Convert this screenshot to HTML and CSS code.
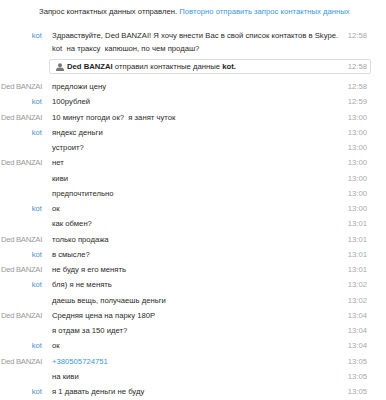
FILE: index.html
```html
<!DOCTYPE html>
<html lang="ru">
<head>
<meta charset="utf-8">
<link rel="stylesheet" href="styles.css">
</head>
<body>
<div class="chat">
  <div class="notice">Запрос контактных данных отправлен. <a class="link">Повторно отправить запрос контактных данных</a></div>

  <div class="row first">
    <div class="name me">kot</div>
    <div class="msg">Здравствуйте, Ded BANZAI! Я хочу внести Вас в свой список контактов в Skype.<br>kot&nbsp; на траксу&nbsp; капюшон, по чем продаш?</div>
    <div class="time">12:58</div>
  </div>

  <div class="contact">
    <svg class="person" width="8" height="8" viewBox="0 0 8 8"><circle cx="4" cy="2.2" r="2" fill="#777"/><path d="M0 8 C0 5 1.5 4.5 4 4.5 C6.5 4.5 8 5 8 8 Z" fill="#777"/></svg>
    <div class="ctext"><b>Ded BANZAI</b> отправил контактные данные <b>kot.</b></div>
    <div class="time">12:58</div>
  </div>

  <div class="row"><div class="name">Ded BANZAI</div><div class="msg">предложи цену</div><div class="time">12:58</div></div>
  <div class="row"><div class="name me">kot</div><div class="msg">100рублей</div><div class="time">12:59</div></div>
  <div class="row"><div class="name">Ded BANZAI</div><div class="msg">10 минут погоди ок?&nbsp; я занят чуток</div><div class="time">13:00</div></div>
  <div class="row"><div class="name me">kot</div><div class="msg">яндекс деньги</div><div class="time">13:00</div></div>
  <div class="row"><div class="name"></div><div class="msg">устроит?</div><div class="time">13:00</div></div>
  <div class="row"><div class="name">Ded BANZAI</div><div class="msg">нет</div><div class="time">13:00</div></div>
  <div class="row"><div class="name"></div><div class="msg">киви</div><div class="time">13:00</div></div>
  <div class="row"><div class="name"></div><div class="msg">предпочтительно</div><div class="time">13:00</div></div>
  <div class="row"><div class="name me">kot</div><div class="msg">ок</div><div class="time">13:00</div></div>
  <div class="row"><div class="name"></div><div class="msg">как обмен?</div><div class="time">13:01</div></div>
  <div class="row"><div class="name">Ded BANZAI</div><div class="msg">только продажа</div><div class="time">13:01</div></div>
  <div class="row"><div class="name me">kot</div><div class="msg">в смысле?</div><div class="time">13:01</div></div>
  <div class="row"><div class="name">Ded BANZAI</div><div class="msg">не буду я его менять</div><div class="time">13:01</div></div>
  <div class="row"><div class="name me">kot</div><div class="msg">бля) я не менять</div><div class="time">13:02</div></div>
  <div class="row"><div class="name"></div><div class="msg">даешь вещь, получаешь деньги</div><div class="time">13:02</div></div>
  <div class="row"><div class="name">Ded BANZAI</div><div class="msg">Средняя цена на парку 180Р</div><div class="time">13:04</div></div>
  <div class="row"><div class="name"></div><div class="msg">я отдам за 150 идет?</div><div class="time">13:04</div></div>
  <div class="row"><div class="name me">kot</div><div class="msg">ок</div><div class="time">13:04</div></div>
  <div class="row"><div class="name">Ded BANZAI</div><div class="msg"><a class="link">+380505724751</a></div><div class="time">13:05</div></div>
  <div class="row"><div class="name"></div><div class="msg">на киви</div><div class="time">13:05</div></div>
  <div class="row"><div class="name me">kot</div><div class="msg">я 1 давать деньги не буду</div><div class="time">13:05</div></div>
</div>
</body>
</html>
```

FILE: styles.css
```css
html, body {
  margin: 0;
  padding: 0;
  background: #ffffff;
}
body {
  font-family: "Liberation Sans", Arial, sans-serif;
  font-size: 7.7px;
  color: #2b2b2b;
  width: 386px;
  height: 400px;
  overflow: hidden;
}
.chat {
  display: flex;
  flex-direction: column;
  padding-top: 4px;
}
.notice {
  line-height: 15px;
  padding-left: 39px;
  margin-bottom: 9px;
  white-space: nowrap;
}
.link {
  color: #3d97d6;
}
.row {
  display: grid;
  grid-template-columns: 42px minmax(0, 1fr) 25px;
  column-gap: 10px;
  padding-right: 19px;
  height: 15.25px;
  line-height: 15.25px;
  white-space: nowrap;
}
.row.first {
  height: auto;
  line-height: 13px;
  padding-top: 1px;
  padding-bottom: 1px;
}
.name {
  text-align: right;
  color: #999999;
  letter-spacing: -0.3px;
}
.name.me {
  color: #4b93c9;
  letter-spacing: 0;
}
.msg {
  color: #2b2b2b;
}
.time {
  text-align: right;
  color: #a8a8a8;
}
.contact {
  display: flex;
  align-items: center;
  margin: 3px 15px 5px 49px;
  height: 13px;
  padding: 0 3px 0 6px;
  border: 1px solid #dedede;
  border-radius: 2px;
  white-space: nowrap;
}
.person {
  margin-right: 3px;
  flex: none;
}
.ctext {
  flex: 1;
  color: #2b2b2b;
}
.ctext b {
  color: #1e1e1e;
}
.contact .time {
  width: 25px;
}
```
